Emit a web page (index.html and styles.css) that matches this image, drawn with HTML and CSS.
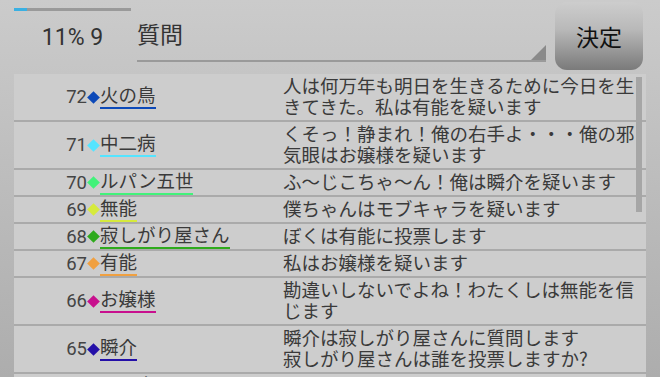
FILE: index.html
```html
<!DOCTYPE html>
<html lang="ja">
<head>
    <meta charset="utf-8">
    <title>質問</title>
    <link rel="stylesheet" href="styles.css">
</head>
<body>
    <div class="header">
        <div class="status">
            <div class="progress"><div class="progress-fill"></div></div>
            <div class="status-text">11% 9</div>
        </div>
        <div class="field">
            <span class="field-text">質問</span>
            <span class="field-corner"></span>
        </div>
        <button class="decide-button">決定</button>
    </div>

    <div class="list">
        <div class="row">
            <div class="who"><span class="num">72</span><span class="mark c-blue"></span><span class="name u-blue">火の鳥</span></div>
            <div class="say">人は何万年も明日を生きるために今日を生きてきた。私は有能を疑います</div>
        </div>
        <div class="row">
            <div class="who"><span class="num">71</span><span class="mark c-cyan"></span><span class="name u-cyan">中二病</span></div>
            <div class="say">くそっ！静まれ！俺の右手よ・・・俺の邪気眼はお嬢様を疑います</div>
        </div>
        <div class="row">
            <div class="who"><span class="num">70</span><span class="mark c-green"></span><span class="name u-green">ルパン五世</span></div>
            <div class="say">ふ～じこちゃ～ん！俺は瞬介を疑います</div>
        </div>
        <div class="row">
            <div class="who"><span class="num">69</span><span class="mark c-lime"></span><span class="name u-lime">無能</span></div>
            <div class="say">僕ちゃんはモブキャラを疑います</div>
        </div>
        <div class="row">
            <div class="who"><span class="num">68</span><span class="mark c-leaf"></span><span class="name u-leaf">寂しがり屋さん</span></div>
            <div class="say">ぼくは有能に投票します</div>
        </div>
        <div class="row">
            <div class="who"><span class="num">67</span><span class="mark c-orange"></span><span class="name u-orange">有能</span></div>
            <div class="say">私はお嬢様を疑います</div>
        </div>
        <div class="row">
            <div class="who"><span class="num">66</span><span class="mark c-pink"></span><span class="name u-pink">お嬢様</span></div>
            <div class="say">勘違いしないでよね！わたくしは無能を信じます</div>
        </div>
        <div class="row">
            <div class="who"><span class="num">65</span><span class="mark c-indigo"></span><span class="name u-indigo">瞬介</span></div>
            <div class="say">瞬介は寂しがり屋さんに質問します<br>寂しがり屋さんは誰を投票しますか?</div>
        </div>
        <div class="row">
            <div class="who"><span class="num">64</span><span class="mark c-blue"></span><span class="name u-blue">火の鳥</span></div>
            <div class="say">私は中二病を疑います</div>
        </div>
        <div class="scrollbar"></div>
    </div>
</body>
</html>
```

FILE: styles.css
```css
html, body{
    margin: 0;
    height: 100%;
    overflow: hidden;
}
body{
    background: linear-gradient(#cbcbcb, #adadad);
    font-family: Roboto, "Noto Sans CJK JP", sans-serif;
    color: #3a3a3a;
}
.header{
    display: flex;
    align-items: flex-start;
    height: 74px;
    padding-left: 14px;
}
.status{
    width: 117px;
}
.progress{
    margin-top: 8px;
    height: 3px;
    background-color: #9a9a9a;
}
.progress-fill{
    width: 13px;
    height: 3px;
    background-color: #3ab0e2;
}
.status-text{
    margin-top: 13px;
    text-align: center;
    font-size: 23px;
    line-height: 28px;
    color: #333;
}
.field{
    position: relative;
    margin-left: 6px;
    margin-top: 18px;
    width: 409px;
    height: 42px;
    border-bottom: 2px solid #9a9a9a;
}
.field-text{
    font-family: "Noto Sans CJK JP", sans-serif;
    font-size: 23px;
    line-height: 30px;
    color: #333;
}
.field-corner{
    position: absolute;
    right: 0;
    bottom: 0;
    width: 0;
    height: 0;
    border-left: 15px solid transparent;
    border-bottom: 15px solid #8a8a8a;
}
.decide-button{
    margin-left: 9px;
    margin-top: 2px;
    width: 88px;
    height: 68px;
    border: none;
    border-radius: 12px;
    background: linear-gradient(#cdcdcd, #b9b9b9 40%, #7a7a7a);
    font-family: "Noto Sans CJK JP", sans-serif;
    font-size: 23px;
    color: #111;
    padding: 0;
}
.list{
    position: relative;
    margin-left: 14px;
    width: 632px;
    background-color: #cdcdcd;
    height: 303px;
    overflow: hidden;
}
.row{
    display: flex;
    border-bottom: 2px solid #aaaaaa;
}
.who{
    width: 269px;
    display: flex;
    align-items: center;
    font-size: 18.5px;
}
.num{
    width: 73px;
    text-align: right;
    color: #444;
}
.mark{
    width: 9px;
    height: 9px;
    margin: 0 2px 0 2px;
    transform: rotate(45deg);
}
.name{
    line-height: 22px;
    border-bottom: 2px solid;
    color: #3a3a3a;
}
.say{
    width: 353px;
    padding: 1px 0 3px;
    font-family: "Noto Sans CJK JP", sans-serif;
    font-size: 18.5px;
    line-height: 21px;
}
.scrollbar{
    position: absolute;
    right: 4px;
    top: 3px;
    width: 6px;
    height: 135px;
    background-color: #a6a6a6;
}
.c-blue{ background-color: #0c49b8; }
.c-cyan{ background-color: #55e4ff; }
.c-green{ background-color: #42f27a; }
.c-lime{ background-color: #d6ea3c; }
.c-leaf{ background-color: #2eaa1c; }
.c-orange{ background-color: #f0a040; }
.c-pink{ background-color: #c8108e; }
.c-indigo{ background-color: #2410a8; }
.u-blue{ border-color: #0c49b8; }
.u-cyan{ border-color: #55e4ff; }
.u-green{ border-color: #42f27a; }
.u-lime{ border-color: #d6ea3c; }
.u-leaf{ border-color: #2eaa1c; }
.u-orange{ border-color: #f0a040; }
.u-pink{ border-color: #c8108e; }
.u-indigo{ border-color: #2410a8; }
```
